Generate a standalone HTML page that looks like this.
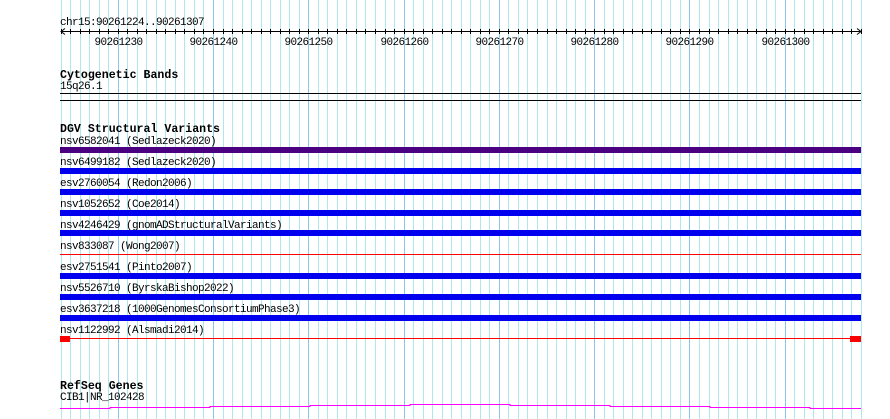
<!DOCTYPE html>
<html><head><meta charset="utf-8"><style>
html,body{margin:0;padding:0;background:#fff;width:890px;height:419px;overflow:hidden}
svg{display:block}
text{font-family:"Liberation Mono","DejaVu Sans Mono",monospace;font-size:11px;letter-spacing:-0.6px;fill:#000}
.b{font-weight:bold;font-size:11.6px;letter-spacing:0}
</style></head><body>
<svg id="s" width="890" height="419" xmlns="http://www.w3.org/2000/svg">
<g id="grid"></g>
<text x="60" y="25">chr15:90261224..90261307</text>
<line x1="61" y1="31.5" x2="861" y2="31.5" stroke="#000" stroke-width="1"/>
<path d="M65 28.5 L61 31.5 L65 34.5 M857 28.5 L861 31.5 L857 34.5" stroke="#000" fill="none"/>
<g id="ticks"></g>
<g id="labels"></g>
<text class="b" x="60" y="78">Cytogenetic Bands</text>
<text x="60" y="89">15q26.1</text>
<rect x="60" y="93" width="801" height="1" fill="#000"/>
<rect x="60" y="100" width="801" height="1" fill="#000"/>
<text class="b" x="60" y="132">DGV Structural Variants</text>
<text x="60" y="144">nsv6582041 (Sedlazeck2020)</text>
<rect x="60" y="147" width="801" height="6" fill="#4b0082"/>
<text x="60" y="165">nsv6499182 (Sedlazeck2020)</text>
<rect x="60" y="168" width="801" height="6" fill="#0000ee"/>
<text x="60" y="186">esv2760054 (Redon2006)</text>
<rect x="60" y="189" width="801" height="6" fill="#0000ee"/>
<text x="60" y="207">nsv1052652 (Coe2014)</text>
<rect x="60" y="210" width="801" height="6" fill="#0000ee"/>
<text x="60" y="228">nsv4246429 (gnomADStructuralVariants)</text>
<rect x="60" y="230" width="801" height="6" fill="#0000ee"/>
<text x="60" y="249">nsv833087 (Wong2007)</text>
<rect x="60" y="254" width="801" height="1" fill="#ff0000"/>
<text x="60" y="270">esv2751541 (Pinto2007)</text>
<rect x="60" y="273" width="801" height="6" fill="#0000ee"/>
<text x="60" y="291">nsv5526710 (ByrskaBishop2022)</text>
<rect x="60" y="294" width="801" height="6" fill="#0000ee"/>
<text x="60" y="312">esv3637218 (1000GenomesConsortiumPhase3)</text>
<rect x="60" y="315" width="801" height="6" fill="#0000ee"/>
<text x="60" y="333">nsv1122992 (Alsmadi2014)</text>
<rect x="60" y="338" width="801" height="1" fill="#ff0000"/>
<rect x="60" y="336" width="10" height="6" fill="#ff0000"/>
<rect x="850" y="336" width="11" height="6" fill="#ff0000"/>
<text class="b" x="60" y="389">RefSeq Genes</text>
<text x="60" y="400">CIB1|NR_102428</text>
<path d="M60 408.5H110V407.5H210V406.5H310V405.5H410V404.5H510V405.5H610V406.5H710V407.5H810V408.5H861" stroke="#ff00ff" fill="none"/>
</svg>
<script>
var ns="http://www.w3.org/2000/svg",g=document.getElementById('grid'),t=document.getElementById('ticks'),L=document.getElementById('labels');
for(var i=0;i<=84;i++){var x=Math.round(60.5+i*9.53)+0.5;var dark=((i-6)%10==0);
var l=document.createElementNS(ns,'line');l.setAttribute('x1',x);l.setAttribute('x2',x);l.setAttribute('y1',0);l.setAttribute('y2',419);l.setAttribute('stroke',dark?'#88c8ee':'#aee8ee');g.appendChild(l);
var k=document.createElementNS(ns,'line');k.setAttribute('x1',x);k.setAttribute('x2',x);k.setAttribute('y1',29);k.setAttribute('y2',34);k.setAttribute('stroke','#000');t.appendChild(k);
if(dark){var tx=document.createElementNS(ns,'text');tx.setAttribute('x',x);tx.setAttribute('y',45);tx.setAttribute('text-anchor','middle');tx.textContent=String(90261224+i);L.appendChild(tx);}}
</script>
</body></html>
